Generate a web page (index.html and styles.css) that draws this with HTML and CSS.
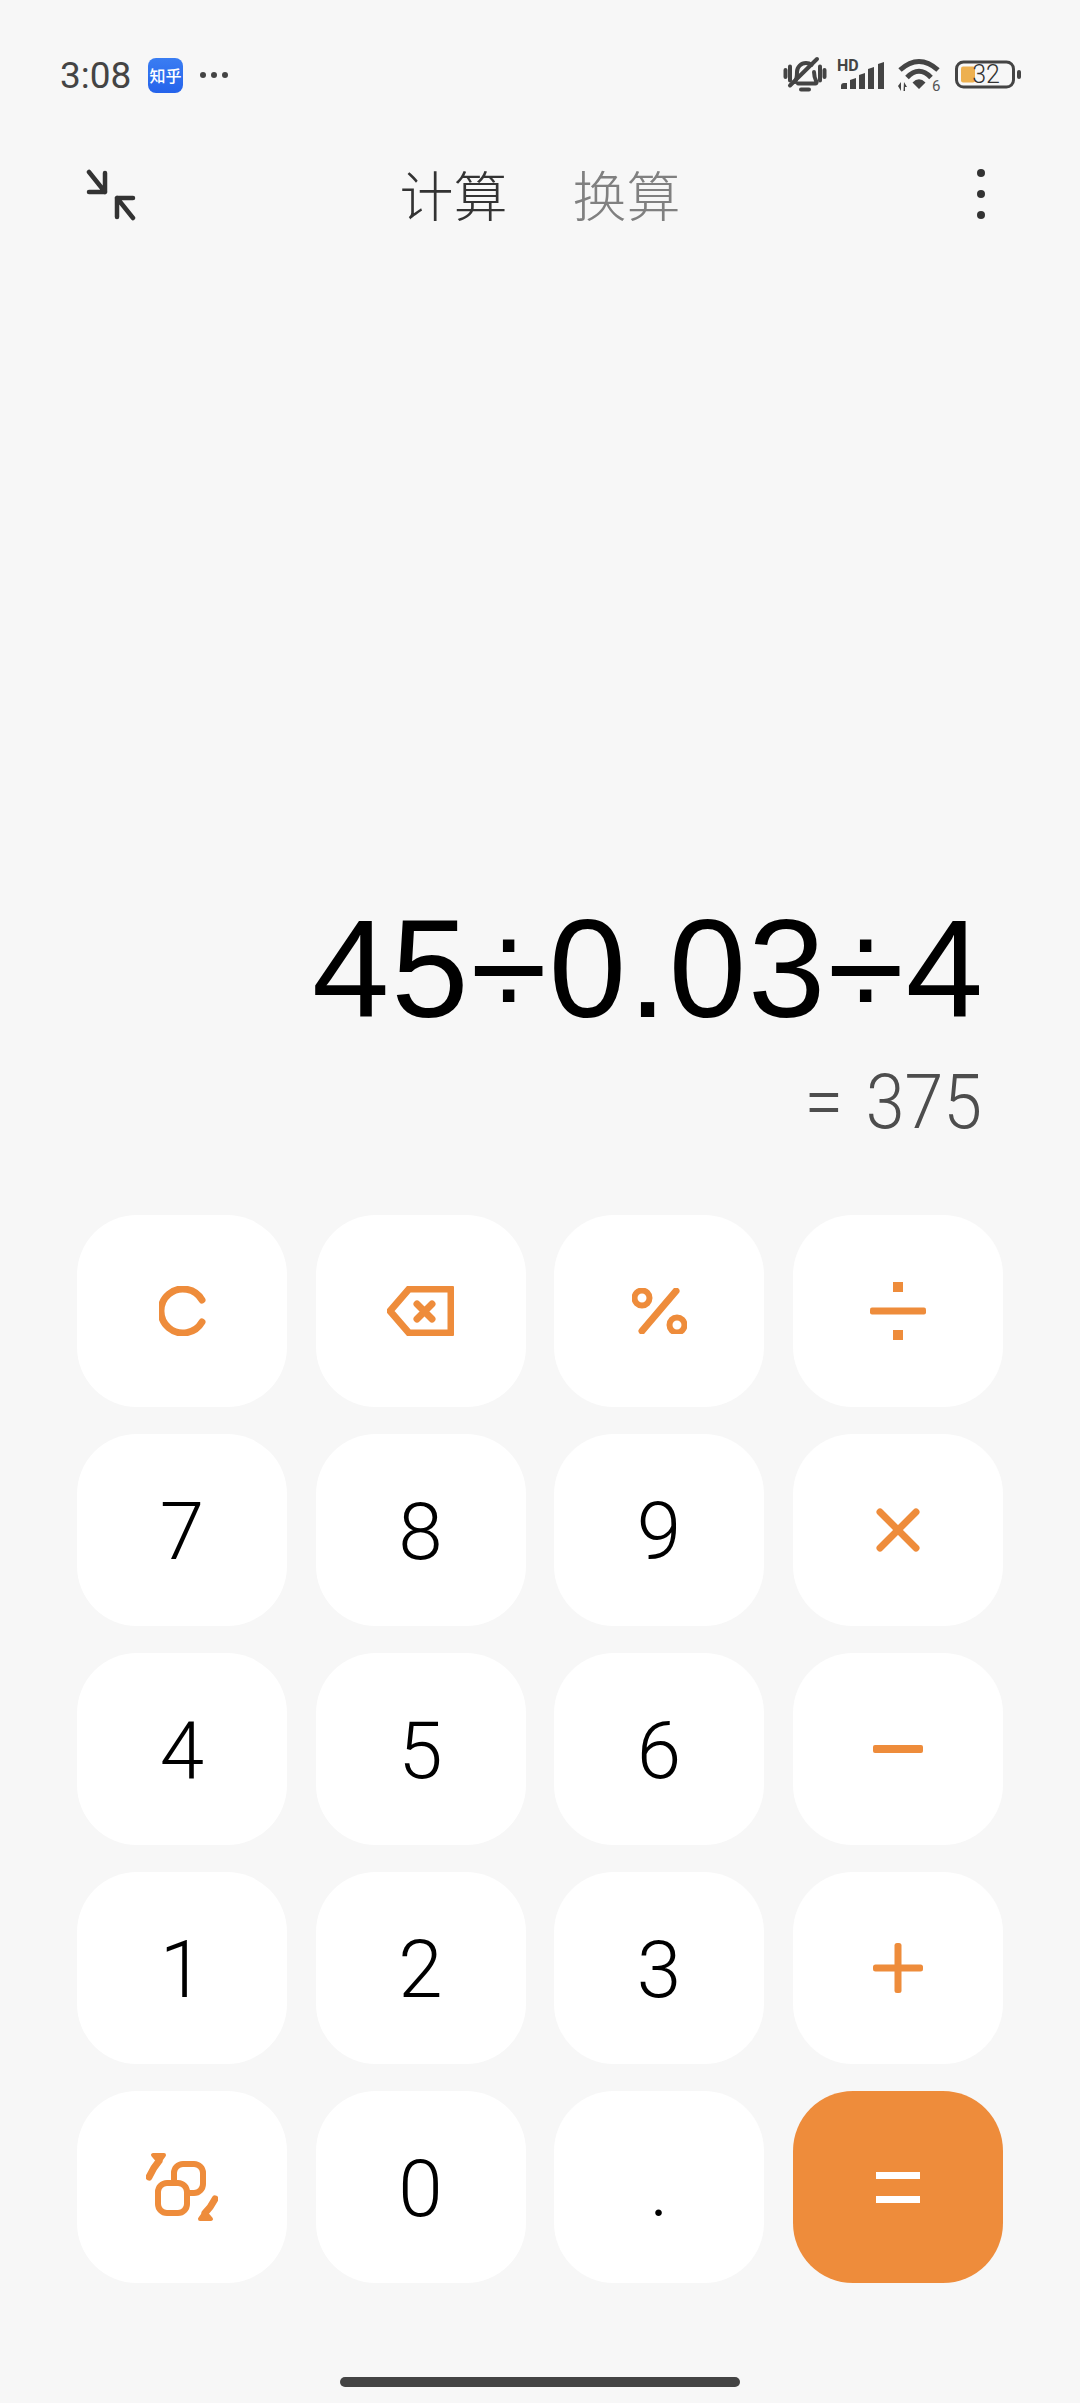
FILE: index.html
```html
<!DOCTYPE html>
<html lang="zh-CN">
<head>
<meta charset="utf-8">
<title>计算器</title>
<link rel="stylesheet" href="styles.css">
</head>
<body>
<div class="app">
  <header class="status">
    <div class="status-left">
      <span class="clock">3:08</span>
      <span class="app-badge">知乎</span>
      <span class="more-dots"><i></i><i></i><i></i></span>
    </div>
    <div class="status-right">
      <svg class="ic-bell" width="42" height="36" viewBox="0 0 42 36">
        <g class="st-line">
          <path d="M1.500 13v7M6 9.500v14M36 9.500v14M40.500 13v7"/>
          <path d="M11 25c2-3 2-6 2-10 0-5 4-9 9-9 2 0 4 .7 5.500 2M30 15c0 4 1 7 2.500 10 .5 1-.5 1.500-1 1.500H14"/>
          <path d="M17 32.500h8"/>
          <path d="M33 2 6 28.500"/>
        </g>
      </svg>
      <svg class="ic-signal" width="48" height="34" viewBox="0 0 48 34">
        <text class="st-hd" x="0" y="13">HD</text>
        <path class="st-fill" d="M4 28a3 3 0 0 1 3-3h3v6H4zM13 22l6-2v11h-6zM22 17l6-2v16h-6zM31 11l6-2v22h-6zM41 6l6-2v27h-6z"/>
      </svg>
      <svg class="ic-wifi" width="44" height="36" viewBox="0 0 44 36">
        <g class="st-line thick">
          <path d="M3 13Q22-4 41 13"/>
          <path d="M10 20.500Q22 8 34 20.500"/>
        </g>
        <path class="st-fill" d="M15.500 25.500Q22 19 28.500 25.500L22 32zM1 29l3-4v9zM7 25l3 5H8v4H6.500z"/>
        <text class="st-small" x="35" y="34">6</text>
      </svg>
      <svg class="ic-battery" width="66" height="30" viewBox="0 0 66 30">
        <rect class="st-frame" x="1.500" y="2" width="57" height="25" rx="7"/>
        <rect class="st-charge" x="6" y="6.500" width="14" height="16" rx="2"/>
        <text class="st-level" x="31" y="23">32</text>
        <rect class="st-fill" x="62" y="10" width="4" height="9" rx="2"/>
      </svg>
    </div>
  </header>

  <nav class="nav">
    <svg class="ic-collapse" width="50" height="52" viewBox="0 0 50 52">
      <path d="M3 3 19 23M19 4V23H3M47 49 31 29M31 48V29H47"/>
    </svg>
    <div class="tabs">
      <span class="tab active">计算</span>
      <span class="tab">换算</span>
    </div>
    <span class="menu-dots"><i></i><i></i><i></i></span>
  </nav>

  <section class="display">
    <div class="expression">45÷0.03÷4</div>
    <div class="result">= 375</div>
  </section>

  <section class="keypad">
    <button class="key">
      <svg width="47" height="50" viewBox="0 0 47 50"><path class="op-line" d="M43 14A22 22 0 1 0 43 36"/></svg>
    </button>
    <button class="key">
      <svg width="67" height="50" viewBox="0 0 67 50"><path class="op-line" d="M64 3H22L3 25 22 47H64Z"/><path class="op-line" d="M30 18 45 33M45 18 30 33"/></svg>
    </button>
    <button class="key">
      <svg width="55" height="46" viewBox="0 0 55 46"><circle class="op-line thin" cx="10" cy="10" r="7.500"/><circle class="op-line thin" cx="45" cy="37" r="7.500"/><path class="op-line" d="M44 3 10 43"/></svg>
    </button>
    <button class="key">
      <svg width="56" height="58" viewBox="0 0 56 58"><path class="op-fill" d="M23 0h10v10H23zM23 48h10v10H23z"/><rect class="op-fill" x="0" y="25.500" width="56" height="7" rx="2"/></svg>
    </button>

    <button class="key digit">7</button>
    <button class="key digit">8</button>
    <button class="key digit">9</button>
    <button class="key">
      <svg width="44" height="44" viewBox="0 0 44 44"><path class="op-line" d="M4 4 40 40M40 4 4 40"/></svg>
    </button>

    <button class="key digit">4</button>
    <button class="key digit">5</button>
    <button class="key digit">6</button>
    <button class="key">
      <svg width="50" height="8" viewBox="0 0 50 8"><rect class="op-fill" width="50" height="8" rx="2"/></svg>
    </button>

    <button class="key digit">1</button>
    <button class="key digit">2</button>
    <button class="key digit">3</button>
    <button class="key">
      <svg width="50" height="50" viewBox="0 0 50 50"><rect class="op-fill" y="21.500" width="50" height="7" rx="2.500"/><rect class="op-fill" x="21.500" width="7" height="50" rx="2.500"/></svg>
    </button>

    <button class="key">
      <svg width="72" height="70" viewBox="0 0 72 70">
        <path class="op-line" d="M3 25Q7 16 13 9"/>
        <path class="op-line op-head" d="M7 3H18L13 10Z"/>
        <rect class="op-line thin" x="28" y="12" width="29" height="29" rx="9"/>
        <rect class="op-line thin front" x="12" y="31" width="29" height="30" rx="9"/>
        <path class="op-line" d="M69 47Q65 55 59 61"/>
        <path class="op-line op-head" d="M65 67H54L59 60Z"/>
      </svg>
    </button>
    <button class="key digit">0</button>
    <button class="key digit">.</button>
    <button class="key equals">
      <svg width="44" height="31" viewBox="0 0 44 31"><path class="eq-fill" d="M0 0h44v7H0zM0 24h44v7H0z"/></svg>
    </button>
  </section>

  <div class="home-bar"></div>
</div>
</body>
</html>
```

FILE: styles.css
```css
* { box-sizing: border-box; }

html, body {
  margin: 0;
  height: 100%;
  background: #f7f7f7;
}

body {
  font-family: Roboto, "Noto Sans CJK SC", sans-serif;
}

.app {
  height: 2403px;
  padding-bottom: 16px;
  display: flex;
  flex-direction: column;
  overflow: hidden;
}

/* status bar */
.status {
  margin-top: 40px;
  height: 70px;
  padding: 0 59px 0 60px;
  display: flex;
  align-items: center;
  justify-content: space-between;
}

.status-left {
  display: flex;
  align-items: center;
}

.clock {
  font-size: 37px;
  color: #444;
  width: 88px;
}

.app-badge {
  width: 35px;
  height: 35px;
  border-radius: 8px;
  background: linear-gradient(180deg, #3a7df2, #2563eb);
  color: #fff;
  font: 500 16px/35px "Noto Sans CJK SC", sans-serif;
  text-align: center;
  white-space: nowrap;
}

.more-dots {
  display: flex;
  gap: 5px;
  margin-left: 17px;
}

.more-dots i {
  width: 6px;
  height: 6px;
  border-radius: 50%;
  background: #444;
}

.status-right {
  display: flex;
  align-items: center;
}

.status-right svg {
  display: block;
  overflow: visible;
}

.ic-signal { margin-left: 11px; }
.ic-wifi { margin-left: 12px; }
.ic-battery { margin-left: 14px; }

.st-line {
  fill: none;
  stroke: #444;
  stroke-width: 4;
  stroke-linecap: round;
  stroke-linejoin: round;
}

.st-line.thick { stroke-width: 5; stroke-linecap: butt; }
.st-fill { fill: #444; }
.st-frame { fill: none; stroke: #444; stroke-width: 3; }
.st-charge { fill: #edb04f; }

.st-hd {
  font: 700 16px Roboto, sans-serif;
  fill: #444;
}

.st-small {
  font: 400 15px Roboto, sans-serif;
  fill: #555;
}

.st-level {
  font: 300 25px Roboto, sans-serif;
  fill: #333;
  text-anchor: middle;
}

/* title row */
.nav {
  margin-top: 20px;
  height: 130px;
  position: relative;
  display: flex;
  align-items: center;
  justify-content: center;
}

.ic-collapse {
  position: absolute;
  left: 86px;
  top: 39px;
  fill: none;
  stroke: #333;
  stroke-width: 4.500;
  stroke-linecap: round;
  stroke-linejoin: round;
}

.tabs {
  display: flex;
  gap: 65px;
  margin-top: -2px;
}

.tab {
  font: 300 54px/1.2 "Noto Sans CJK SC", sans-serif;
  color: #808080;
}

.tab.active { color: #333; }

.menu-dots {
  position: absolute;
  right: 95px;
  top: 39px;
  display: flex;
  flex-direction: column;
  gap: 13px;
}

.menu-dots i {
  width: 8px;
  height: 8px;
  border-radius: 50%;
  background: #333;
}

/* expression and result */
.display {
  flex: 1;
  padding: 0 95px 75px 0;
  display: flex;
  flex-direction: column;
  justify-content: flex-end;
  align-items: flex-end;
}

.expression {
  font: 400 139px/1 "Liberation Sans", Arial, sans-serif;
  letter-spacing: 2px;
  color: #000;
  white-space: nowrap;
}

.result {
  margin-top: 26px;
  margin-right: 3px;
  font: 300 76px/1 Roboto, sans-serif;
  color: #4d4d4d;
  white-space: pre;
  word-spacing: 6px;
  transform: scaleX(.92);
  transform-origin: right center;
}

/* keys */
.keypad {
  padding-left: 77px;
  display: grid;
  grid-template-columns: repeat(4, 210px);
  grid-auto-rows: 192px;
  column-gap: 28.500px;
  row-gap: 27px;
}

.key {
  padding: 0;
  border: 0;
  border-radius: 60px;
  background: #fff;
  display: flex;
  align-items: center;
  justify-content: center;
}

.key svg { display: block; }

.digit {
  padding-top: 3px;
  font: 300 80px/1 Roboto, sans-serif;
  color: #000;
}

.equals { background: #ee8c3b; }

.op-line {
  fill: none;
  stroke: #ee8c3b;
  stroke-width: 7;
  stroke-linecap: round;
  stroke-linejoin: round;
}

.op-line.thin { stroke-width: 6; }
.op-line.front { fill: #fff; }
.op-head { fill: #ee8c3b; stroke-width: 4; }

.op-fill { fill: #ee8c3b; }
.eq-fill { fill: #fff; }

.home-bar {
  width: 400px;
  height: 10px;
  margin: 94px auto 0;
  border-radius: 5px;
  background: #444;
}
```
